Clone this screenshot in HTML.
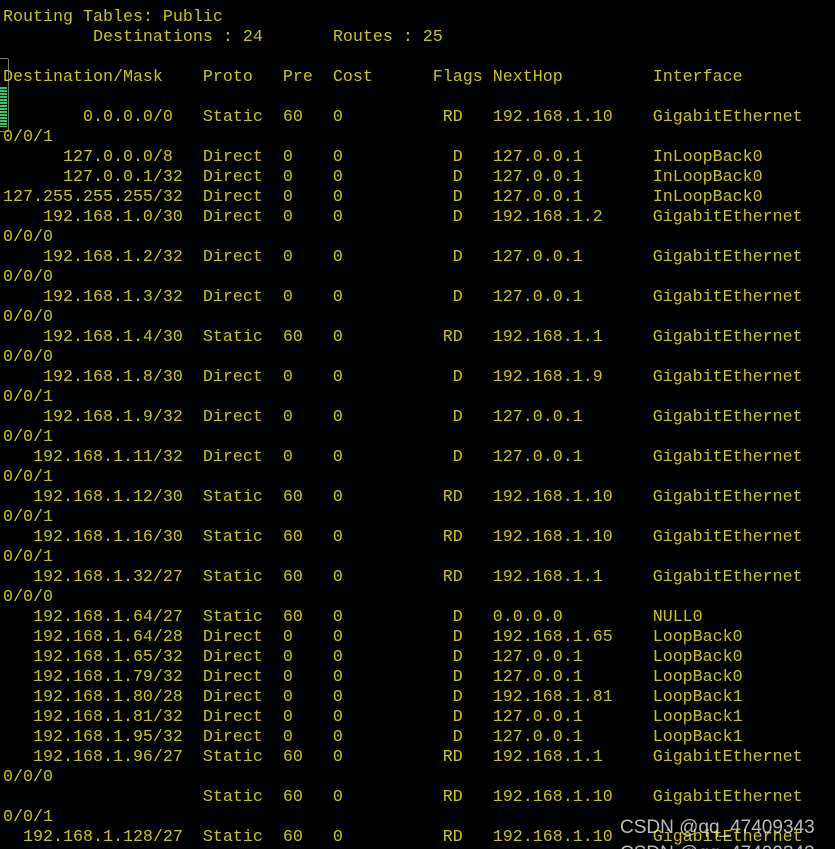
<!DOCTYPE html>
<html><head><meta charset="utf-8"><style>
html,body{margin:0;padding:0;background:#000;width:835px;height:849px;overflow:hidden;position:relative}
pre{margin:0;position:absolute;left:3px;top:8px;font-family:"Liberation Mono",monospace;font-size:16.67px;line-height:20px;color:#c8c800;white-space:pre}
.w{position:absolute;left:620px;top:817px;font-family:"Liberation Sans",sans-serif;font-size:19px;color:rgba(230,230,230,0.8);white-space:nowrap}
.w2{top:843px}
.box{position:absolute;left:-2px;top:58px;width:9px;height:72px;border:1px solid #777;border-radius:2px}
.bars{position:absolute;left:0;top:87px;width:7px;height:40px;background:repeating-linear-gradient(#22cc66 0 2px,#000 2px 3px)}
</style></head><body>
<div class="box"></div><div class="bars"></div>
<pre>Routing Tables: Public
         Destinations : 24       Routes : 25

Destination/Mask    Proto   Pre  Cost      Flags NextHop         Interface

        0.0.0.0/0   Static  60   0          RD   192.168.1.10    GigabitEthernet
0/0/1
      127.0.0.0/8   Direct  0    0           D   127.0.0.1       InLoopBack0
      127.0.0.1/32  Direct  0    0           D   127.0.0.1       InLoopBack0
127.255.255.255/32  Direct  0    0           D   127.0.0.1       InLoopBack0
    192.168.1.0/30  Direct  0    0           D   192.168.1.2     GigabitEthernet
0/0/0
    192.168.1.2/32  Direct  0    0           D   127.0.0.1       GigabitEthernet
0/0/0
    192.168.1.3/32  Direct  0    0           D   127.0.0.1       GigabitEthernet
0/0/0
    192.168.1.4/30  Static  60   0          RD   192.168.1.1     GigabitEthernet
0/0/0
    192.168.1.8/30  Direct  0    0           D   192.168.1.9     GigabitEthernet
0/0/1
    192.168.1.9/32  Direct  0    0           D   127.0.0.1       GigabitEthernet
0/0/1
   192.168.1.11/32  Direct  0    0           D   127.0.0.1       GigabitEthernet
0/0/1
   192.168.1.12/30  Static  60   0          RD   192.168.1.10    GigabitEthernet
0/0/1
   192.168.1.16/30  Static  60   0          RD   192.168.1.10    GigabitEthernet
0/0/1
   192.168.1.32/27  Static  60   0          RD   192.168.1.1     GigabitEthernet
0/0/0
   192.168.1.64/27  Static  60   0           D   0.0.0.0         NULL0
   192.168.1.64/28  Direct  0    0           D   192.168.1.65    LoopBack0
   192.168.1.65/32  Direct  0    0           D   127.0.0.1       LoopBack0
   192.168.1.79/32  Direct  0    0           D   127.0.0.1       LoopBack0
   192.168.1.80/28  Direct  0    0           D   192.168.1.81    LoopBack1
   192.168.1.81/32  Direct  0    0           D   127.0.0.1       LoopBack1
   192.168.1.95/32  Direct  0    0           D   127.0.0.1       LoopBack1
   192.168.1.96/27  Static  60   0          RD   192.168.1.1     GigabitEthernet
0/0/0
                    Static  60   0          RD   192.168.1.10    GigabitEthernet
0/0/1
  192.168.1.128/27  Static  60   0          RD   192.168.1.10    GigabitEthernet</pre>
<div class="w">CSDN @qq_47409343</div>
<div class="w w2">CSDN @qq_47409343</div>
</body></html>
